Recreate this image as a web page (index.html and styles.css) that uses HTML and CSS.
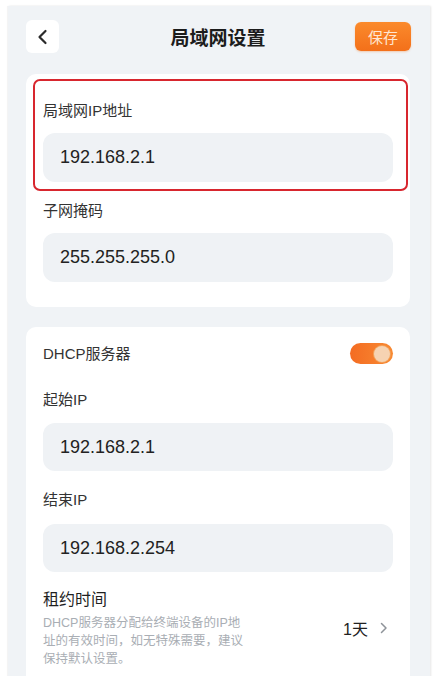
FILE: index.html
```html
<!DOCTYPE html>
<html lang="zh-CN">
<head>
<meta charset="utf-8">
<title>局域网设置</title>
<link rel="stylesheet" href="styles.css">
</head>
<body>
<div class="screen">
  <header class="topbar">
    <button class="back" aria-label="返回">
      <svg width="14" height="16" viewBox="0 0 14 16"><path d="M9.5 2 L3.5 8 L9.5 14" fill="none" stroke="#2b2b2b" stroke-width="2.2" stroke-linecap="round" stroke-linejoin="round"/></svg>
    </button>
    <h1 class="title">局域网设置</h1>
    <button class="save">保存</button>
  </header>

  <section class="card card-lan">
    <div class="highlight"></div>
    <div class="field first">
      <div class="label">局域网IP地址</div>
      <div class="input">192.168.2.1</div>
    </div>
    <div class="field">
      <div class="label">子网掩码</div>
      <div class="input">255.255.255.0</div>
    </div>
  </section>

  <section class="card card-dhcp">
    <div class="switch-row">
      <div class="label">DHCP服务器</div>
      <div class="toggle"><span class="knob"></span></div>
    </div>
    <div class="field f-start">
      <div class="label">起始IP</div>
      <div class="input">192.168.2.1</div>
    </div>
    <div class="field f-end">
      <div class="label">结束IP</div>
      <div class="input">192.168.2.254</div>
    </div>
    <div class="lease">
      <div class="lease-text">
        <div class="lease-title">租约时间</div>
        <div class="lease-desc">DHCP服务器分配给终端设备的IP地<br>址的有效时间，如无特殊需要，建议<br>保持默认设置。</div>
      </div>
      <div class="lease-value">
        <span>1天</span>
        <svg width="8" height="12" viewBox="0 0 8 12"><path d="M1.5 1.5 L6 6 L1.5 10.5" fill="none" stroke="#8e9399" stroke-width="1.5" stroke-linecap="round" stroke-linejoin="round"/></svg>
      </div>
    </div>
  </section>
</div>
</body>
</html>
```

FILE: styles.css
```css
* { box-sizing: border-box; }
html, body { margin: 0; padding: 0; background: #ffffff; }
body {
  font-family: "Liberation Sans", "Noto Sans CJK SC", sans-serif;
  color: #333;
  height: 676px;
  overflow: hidden;
  padding: 6px 10px 0 8px;
}
.screen {
  background: #f0f3f6;
  height: 700px;
  padding: 14px 20px 0 18px;
  box-shadow: 1px 0 2px rgba(0,0,0,0.10), -1px 0 1px rgba(0,0,0,0.04);
}
.topbar {
  display: flex;
  align-items: center;
  height: 33px;
  margin-bottom: 21px;
}
.back {
  flex: none;
  width: 33px; height: 33px;
  border: none; border-radius: 6px;
  background: #fff;
  display: flex; align-items: center; justify-content: center;
  padding: 0;
}
.title {
  flex: 1;
  margin: 0;
  text-align: center;
  font-family: "Noto Sans CJK SC", sans-serif;
  font-size: 19px;
  font-weight: 700;
  color: #1c1c1c;
  padding-left: 22px;
}
.save {
  flex: none;
  width: 56px; height: 29px;
  border: none; border-radius: 6px;
  background: linear-gradient(180deg, #fb8a2c 0%, #f3701a 100%);
  color: #ffe6d2;
  font-family: "Noto Sans CJK SC", sans-serif;
  font-size: 15px;
  padding: 0;
  margin-right: -1px;
  box-shadow: 0 1px 2px rgba(240,110,20,0.3);
}
.card {
  position: relative;
  background: #fff;
  border-radius: 10px;
  padding: 0 17px;
}
.card-lan { padding-top: 27px; padding-bottom: 25px; margin-bottom: 20px; }
.highlight {
  position: absolute;
  left: 7px; right: 2px; top: 5px; height: 112px;
  border: 2px solid #d8262e;
  border-radius: 7px;
  pointer-events: none;
}
.label {
  font-family: "Liberation Sans", "Noto Sans CJK SC", sans-serif;
  font-size: 15px;
  line-height: 20px;
  color: #333;
}
.field .label { margin-bottom: 12px; }
.field + .field { margin-top: 19px; }
.input {
  height: 49px;
  border-radius: 12px;
  background: #eff2f5;
  display: flex; align-items: center;
  padding-left: 17px;
  font-size: 18px;
  color: #222;
}
.card-dhcp { padding-top: 16px; padding-bottom: 30px; }
.switch-row {
  display: flex; align-items: center; justify-content: space-between;
  height: 21px;
  margin-bottom: 26px;
}
.toggle {
  width: 43px; height: 21px;
  border-radius: 11px;
  background: linear-gradient(90deg, #f46c22 0%, #f88a33 100%);
  display: flex; align-items: center; justify-content: flex-end;
  padding-right: 3px;
}
.knob {
  width: 16px; height: 16px; border-radius: 50%;
  background: #f6d3b2;
  box-shadow: 0 0 0 1px #f2a25a;
}
.f-start .label { margin-bottom: 13px; }
.f-end { margin-top: 18px; }
.f-end .label { margin-bottom: 14px; }
.f-start .input, .f-end .input { height: 48px; }
.lease {
  margin-top: 16px;
  display: flex; align-items: center; justify-content: space-between;
}
.lease-title {
  font-family: "Noto Sans CJK SC", sans-serif;
  font-size: 16px;
  line-height: 20px;
  font-weight: 400;
  color: #1f1f1f;
  margin-bottom: 6px;
}
.lease-desc {
  font-size: 12.5px;
  line-height: 18px;
  color: #a9aeb4;
  white-space: nowrap;
}
.lease-value {
  display: flex; align-items: center; gap: 12px;
  padding-right: 5px;
  font-size: 16px;
  color: #222;
}
```
